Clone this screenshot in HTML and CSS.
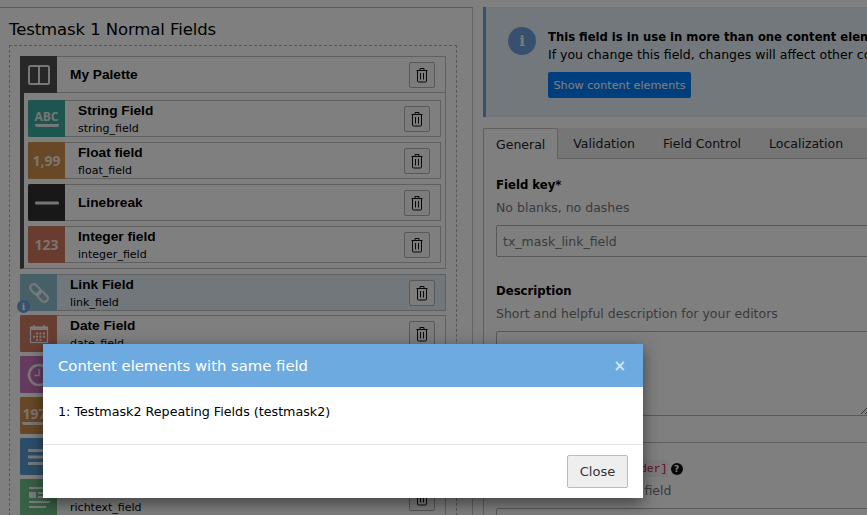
FILE: index.html
```html
<!DOCTYPE html>
<html lang="en">
<head>
  <meta charset="UTF-8">
  <meta name="viewport" content="width=device-width, initial-scale=1">
  <title>Mask</title>
  <link rel="stylesheet" href="styles.css">
</head>
<body>
  <svg class="sprites" width="0" height="0">
    <symbol id="trash" viewBox="0 0 16 16">
      <path d="M2.5 3.5h11M6 3.5V1.5h4v2M3.5 3.500V14a1 1 0 0 0 1 1h7a1 1 0 0 0 1-1V3.500M6.500 6v6.500M9.500 6v6.500" fill="none" stroke="currentColor" stroke-width="1"/>
    </symbol>
  </svg>

  <div class="page">
    <div class="left">
      <h1 class="mask-title">Testmask 1 Normal Fields</h1>
      <div class="dropzone">
        <div class="palette">
          <div class="row palette-head">
            <div class="ico ico-dark">
              <svg width="24" height="22" viewBox="0 0 24 22"><rect x="2" y="2" width="20" height="18" rx="1.500" fill="none" stroke="#fff" stroke-opacity=".9" stroke-width="2"/><path d="M12 2v18" stroke="#fff" stroke-opacity=".9" stroke-width="2"/></svg>
            </div>
            <div class="row-text"><b>My Palette</b></div>
            <button class="del"><svg width="16" height="16"><use href="#trash"/></svg></button>
          </div>
          <div class="palette-body">
            <div class="row">
              <div class="ico ico-string"><span class="ico-abc">ABC</span></div>
              <div class="row-text"><b>String Field</b><small>string_field</small></div>
              <button class="del"><svg width="16" height="16"><use href="#trash"/></svg></button>
            </div>
            <div class="row">
              <div class="ico ico-float"><span class="ico-num">1,99</span></div>
              <div class="row-text"><b>Float field</b><small>float_field</small></div>
              <button class="del"><svg width="16" height="16"><use href="#trash"/></svg></button>
            </div>
            <div class="row">
              <div class="ico ico-break"><svg width="24" height="4"><rect width="24" height="3" y="0.500" rx="1" fill="#fff" fill-opacity=".9"/></svg></div>
              <div class="row-text"><b>Linebreak</b></div>
              <button class="del"><svg width="16" height="16"><use href="#trash"/></svg></button>
            </div>
            <div class="row">
              <div class="ico ico-int"><span class="ico-num">123</span></div>
              <div class="row-text"><b>Integer field</b><small>integer_field</small></div>
              <button class="del"><svg width="16" height="16"><use href="#trash"/></svg></button>
            </div>
          </div>
        </div>

        <div class="row row-top is-active">
          <div class="ico ico-link">
            <svg width="22" height="22" viewBox="0 0 22 22" fill="none" stroke="#fff" stroke-opacity=".75" stroke-width="2.400"><g transform="rotate(45 11 11)"><rect x="0" y="7.500" width="12" height="7" rx="3.500"/><rect x="10" y="7.500" width="12" height="7" rx="3.500"/></g></svg>
          </div>
          <div class="row-text"><b>Link Field</b><small>link_field</small></div>
          <button class="del"><svg width="16" height="16"><use href="#trash"/></svg></button>
          <span class="badge">i</span>
        </div>
        <div class="row row-top">
          <div class="ico ico-date">
            <svg width="20" height="20" viewBox="0 0 20 20"><rect x="1.500" y="3" width="17" height="15.500" fill="none" stroke="#fff" stroke-opacity=".9" stroke-width="1.200"/><rect x="1.500" y="3" width="17" height="3" fill="#fff" fill-opacity=".9"/><path d="M5 1v3M15 1v3" stroke="#fff" stroke-opacity=".9" stroke-width="1.500"/><path d="M7 8.500h2v2H7zM10.500 8.500h2v2h-2zM14 8.500h2v2h-2zM4 11.800h2v2H4zM7 11.800h2v2H7zM10.500 11.800h2v2h-2zM14 11.800h2v2h-2zM7 15h2v1.800H7zM10.500 15h2v1.800h-2z" fill="#fff" fill-opacity=".9"/></svg>
          </div>
          <div class="row-text"><b>Date Field</b><small>date_field</small></div>
          <button class="del"><svg width="16" height="16"><use href="#trash"/></svg></button>
        </div>
        <div class="row row-top">
          <div class="ico ico-time">
            <svg width="24" height="24" viewBox="0 0 24 24" fill="none" stroke="#fff" stroke-opacity=".9" stroke-width="2.500"><circle cx="12" cy="12" r="10"/><path d="M12 6v6.500H7.500" stroke-width="1.500"/></svg>
          </div>
          <div class="row-text"><b>Time Field</b><small>time_field</small></div>
          <button class="del"><svg width="16" height="16"><use href="#trash"/></svg></button>
        </div>
        <div class="row row-top">
          <div class="ico ico-year"><span class="ico-abc ico-year-text">1970</span></div>
          <div class="row-text"><b>Year Field</b><small>year_field</small></div>
          <button class="del"><svg width="16" height="16"><use href="#trash"/></svg></button>
        </div>
        <div class="row row-top">
          <div class="ico ico-text">
            <svg width="22" height="18" viewBox="0 0 22 18" fill="#fff" fill-opacity=".9"><rect width="22" height="3" rx=".5" y="1"/><rect width="22" height="3" rx=".5" y="7.500"/><rect width="22" height="3" rx=".5" y="14"/></svg>
          </div>
          <div class="row-text"><b>Text Field</b><small>text_field</small></div>
          <button class="del"><svg width="16" height="16"><use href="#trash"/></svg></button>
        </div>
        <div class="row row-top">
          <div class="ico ico-rich">
            <svg width="24" height="24" viewBox="0 0 24 24" fill="#fff" fill-opacity=".9"><rect x="2" y="1" width="19" height="2"/><rect x="2" y="6" width="7" height="6"/><rect x="11" y="6" width="6" height="2"/><rect x="11" y="10" width="11" height="2"/><rect x="2" y="15" width="21" height="2"/><rect x="2" y="20" width="17" height="2"/></svg>
          </div>
          <div class="row-text"><b>Richtext Field</b><small>richtext_field</small></div>
          <button class="del"><svg width="16" height="16"><use href="#trash"/></svg></button>
        </div>
      </div>
    </div>

    <div class="right">
      <div class="notice">
        <span class="notice-icon">i</span>
        <div class="notice-body">
          <strong>This field is in use in more than one content element.</strong>
          <p>If you change this field, changes will affect other content elements.</p>
          <button class="btn-primary">Show content elements</button>
        </div>
      </div>

      <div class="tabs">
        <a class="tab tab-on">General</a>
        <a class="tab">Validation</a>
        <a class="tab">Field Control</a>
        <a class="tab">Localization</a>
      </div>
      <div class="tab-pane">
        <div class="form-part">
          <label>Field key*</label>
          <p class="hint">No blanks, no dashes</p>
          <input class="field" type="text" value="tx_mask_link_field" readonly>
        </div>
        <div class="form-part">
          <label>Description</label>
          <p class="hint">Short and helpful description for your editors</p>
          <textarea class="field field-area"></textarea>
        </div>
        <div class="form-part form-part-line">
          <label>Placeholder <code>[placeholder]</code><span class="help">?</span></label>
          <p class="hint">Placeholder text of this field</p>
          <input class="field" type="text">
        </div>
      </div>
    </div>
  </div>

  <div class="backdrop"></div>
  <div class="modal">
    <div class="modal-head">
      <span>Content elements with same field</span>
      <span class="modal-x">×</span>
    </div>
    <div class="modal-body">1: Testmask2 Repeating Fields (testmask2)</div>
    <div class="modal-foot"><button class="btn-close">Close</button></div>
  </div>
</body>
</html>
```

FILE: styles.css
```css
html, body {
  margin: 0;
  height: 100%;
  overflow: hidden;
}
body {
  font-family: "DejaVu Sans", Verdana, sans-serif;
  font-size: 12px;
  background: #fff;
  color: #000;
}
.sprites {
  position: absolute;
}
.page {
  display: flex;
  height: 515px;
  overflow: hidden;
}

/* left column */
.left {
  width: 473px;
  margin-top: 7px;
  padding: 0 15px 0 9px;
  box-sizing: border-box;
  border-top: 1px solid #b4b4b4;
  border-right: 1px solid #c8c8c8;
  flex: none;
}
.mask-title {
  margin: 11px 0 4px;
  font-size: 16.500px;
  font-weight: normal;
  line-height: 22px;
  letter-spacing: -0.1px;
}
.dropzone {
  border: 1px dashed #b0b0b0;
  border-bottom: 0;
  padding: 10px 10px 0 10px;
}
.row {
  display: flex;
  align-items: center;
  height: 35px;
  border: 1px solid #c0c0c0;
  border-left: 0;
  position: relative;
}
.row-top {
  margin-bottom: 4px;
}
.ico {
  width: 37px;
  height: 37px;
  margin-top: -1px;
  margin-bottom: -1px;
  border-radius: 2px 0 0 2px;
  flex: none;
  display: flex;
  align-items: center;
  justify-content: center;
}
.ico-dark { background: #4f4f4f; border-radius: 0; }
.ico-string { background: #3cac9e; }
.ico-float { background: #d0904c; }
.ico-break { background: #303030; }
.ico-int { background: #d0785e; }
.ico-link { background: #8fc0d0; }
.ico-date { background: #d07c66; }
.ico-time { background: #cc76c0; }
.ico-year { background: #d0904c; }
.ico-text { background: #5a9cd0; }
.ico-rich { background: #70c08a; }
.ico-abc, .ico-num {
  color: rgba(255,255,255,.85);
  font-weight: bold;
  font-family: "Open Sans", sans-serif;
}
.ico-abc {
  font-size: 12px;
  line-height: 13px;
  border-bottom: 3px solid rgba(255,255,255,.85);
  padding: 0 0 1px;
  border-radius: 2px;
}
.ico-num {
  font-size: 14px;
}
.ico-year-text {
  font-size: 14px;
  line-height: 15px;
}
.row-text {
  flex: 1;
  padding-left: 13px;
  font-family: "Liberation Sans", Arial, sans-serif;
  min-width: 0;
}
.row-text b {
  display: block;
  font-size: 13.700px;
  line-height: 16px;
}
.row-text b:not(:only-child) {
  margin-top: 2px;
}
.row-text small {
  display: block;
  font-family: "DejaVu Sans", sans-serif;
  font-size: 11px;
  line-height: 15px;
  margin-top: 2px;
}
.del {
  width: 26px;
  height: 26px;
  margin-right: 10px;
  padding: 0;
  border: 1px solid #b0b0b0;
  border-radius: 2px;
  background: #f8f8f8;
  color: #111;
  display: flex;
  align-items: center;
  justify-content: center;
  flex: none;
}
.palette {
  margin-bottom: 5px;
}
.palette-body {
  border-left: 4px solid #4f4f4f;
  border-right: 1px solid #c0c0c0;
  border-bottom: 1px solid #c0c0c0;
  padding: 7px 4px 5px 4px;
}
.palette-body .row {
  margin-bottom: 5px;
}
.palette-body .row:last-child {
  margin-bottom: 0;
}
.is-active {
  background: #e4eef8;
}
.badge {
  position: absolute;
  left: -3px;
  bottom: -3px;
  width: 13px;
  height: 13px;
  border-radius: 50%;
  background: #6fa0e0;
  color: #fff;
  font: bold 10px/13px "DejaVu Serif", serif;
  text-align: center;
}

/* right column */
.right {
  flex: 1;
  min-width: 0;
  padding: 7px 0 0 10px;
  white-space: nowrap;
}
.notice {
  width: 450px;
  height: 110px;
  box-sizing: border-box;
  background: #e6f0f8;
  border-left: 3px solid #6fa0e0;
  display: flex;
  padding: 20px 0 0 22px;
  font-size: 12.500px;
  line-height: 18px;
}
.notice-icon {
  width: 28px;
  height: 28px;
  border-radius: 50%;
  background: #6fa0dc;
  color: #f0f4f8;
  text-align: center;
  font: bold 15px/28px "DejaVu Serif", serif;
  flex: none;
}
.notice-body {
  margin-left: 12px;
  padding-top: 1px;
}
.notice-body strong {
  display: block;
  font-size: 11.600px;
}
.notice-body p {
  margin: 0 0 8px;
}
.btn-primary {
  display: block;
  height: 26px;
  width: 143px;
  padding: 0;
  border: 0;
  border-radius: 2px;
  background: #007efa;
  color: #fff;
  font: 11.200px "DejaVu Sans", sans-serif;
}
.tabs {
  display: flex;
  margin-top: 11px;
  width: 450px;
  height: 31px;
  background: #ececec;
  box-sizing: border-box;
  border-bottom: 1px solid #c0c0c0;
}
.tab {
  padding: 0 14px;
  line-height: 32px;
  font-size: 12.500px;
  color: #222;
}
.tab-on {
  background: #fff;
  border: 1px solid #c0c0c0;
  border-bottom: 0;
  border-radius: 2px 2px 0 0;
  height: 31px;
  box-sizing: border-box;
  padding: 0 12px;
  margin-right: 1px;
  line-height: 31px;
}
.tab-pane {
  border-left: 1px solid #c0c0c0;
  padding-left: 12px;
}
.form-part label {
  display: block;
  font-weight: bold;
  font-size: 11.700px;
  line-height: 18px;
}
.form-part {
  padding-top: 17px;
}
.hint {
  margin: 5px 0 8px;
  font-size: 12.500px;
  line-height: 18px;
  color: #777;
}
.field {
  display: block;
  width: 374px;
  height: 32px;
  box-sizing: border-box;
  padding: 0 6px;
  border: 1px solid #b0b0b0;
  border-radius: 2px;
  background: #fff;
  color: #777;
  font: 12.500px "DejaVu Sans", sans-serif;
  margin-bottom: 8px;
}
.field-area {
  height: 85px;
  margin-bottom: 26px;
  resize: vertical;
}
.form-part-line {
  border-top: 1px solid #c0c0c0;
  width: 400px;
  padding-top: 16px;
}
.form-part-line label code {
  font: normal 11.500px "Liberation Mono", monospace;
  color: #c1174f;
  background: #f9f2f4;
  padding: 2px 0;
}
.help {
  display: inline-block;
  width: 12px;
  height: 12px;
  margin-left: 3px;
  border-radius: 50%;
  background: #111;
  color: #fff;
  font-size: 9px;
  line-height: 12px;
  text-align: center;
}

/* modal */
.backdrop {
  position: absolute;
  inset: 0;
  background: rgba(0,0,0,.5);
}
.modal {
  position: absolute;
  left: 43px;
  top: 344px;
  width: 600px;
  height: 154px;
  background: #fff;
  box-shadow: 0 5px 15px rgba(0,0,0,.5);
  display: flex;
  flex-direction: column;
}
.modal-head {
  height: 43px;
  flex: none;
  background: #6daae0;
  color: #fff;
  display: flex;
  align-items: center;
  justify-content: space-between;
  padding: 0 17px 0 15px;
  font-size: 14.800px;
}
.modal-x {
  font-size: 15px;
  font-weight: bold;
  color: #d3e5f5;
}
.modal-body {
  height: 58px;
  box-sizing: border-box;
  padding: 16px 15px 15px;
  font-size: 12.700px;
  line-height: 18px;
  color: #000;
  border-bottom: 1px solid #e5e5e5;
  flex: none;
}
.modal-foot {
  flex: 1;
  display: flex;
  justify-content: flex-end;
  align-items: flex-start;
  padding: 10px 15px 0;
}
.btn-close {
  width: 61px;
  height: 33px;
  border: 1px solid #bbb;
  border-radius: 2px;
  background: #eee;
  color: #333;
  font: 13px "DejaVu Sans", sans-serif;
}
```
